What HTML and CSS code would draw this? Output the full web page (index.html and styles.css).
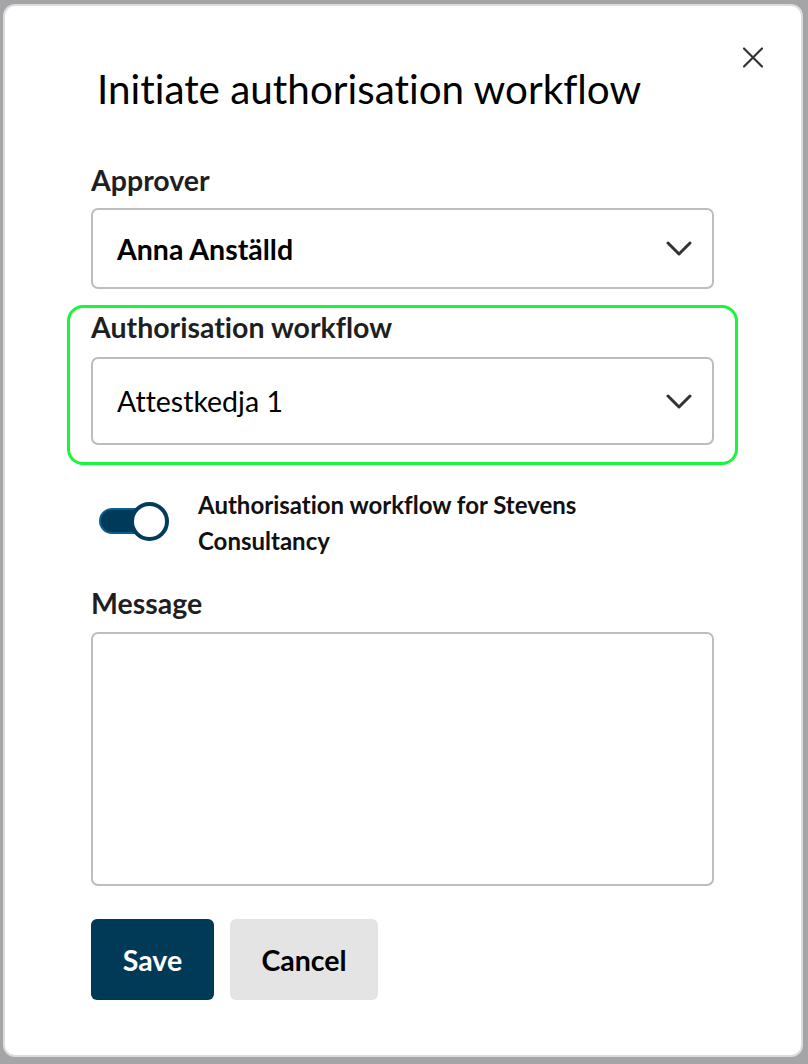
FILE: index.html
```html
<!DOCTYPE html>
<html lang="en">
<head>
<meta charset="utf-8">
<title>Initiate authorisation workflow</title>
<link rel="stylesheet" href="styles.css">
</head>
<body>
<div class="backdrop">
  <div class="modal">
    <button class="close" aria-label="Close">
      <svg width="20" height="21" viewBox="0 0 20 21"><path d="M1 1.5 L19 19.5 M19 1.5 L1 19.5" stroke="#333" stroke-width="2.2" fill="none" stroke-linecap="round"/></svg>
    </button>
    <h1 class="title">Initiate authorisation workflow</h1>

    <div class="field first">
      <label class="label">Approver</label>
      <div class="select bold-value">
        <span>Anna Anställd</span>
        <svg class="chev" width="26" height="15" viewBox="0 0 26 15"><path d="M2 2 L13 13 L24 2" stroke="#333" stroke-width="3" fill="none" stroke-linecap="round" stroke-linejoin="round"/></svg>
      </div>
    </div>

    <div class="highlight">
      <label class="label">Authorisation workflow</label>
      <div class="select tall">
        <span>Attestkedja 1</span>
        <svg class="chev" width="26" height="15" viewBox="0 0 26 15"><path d="M2 2 L13 13 L24 2" stroke="#333" stroke-width="3" fill="none" stroke-linecap="round" stroke-linejoin="round"/></svg>
      </div>
    </div>

    <div class="toggle-row">
      <div class="toggle"><span class="track"></span><span class="knob"></span></div>
      <div class="toggle-label">Authorisation workflow for Stevens Consultancy</div>
    </div>

    <div class="field message">
      <label class="label">Message</label>
      <div class="textarea"></div>
    </div>

    <div class="actions">
      <button class="btn primary">Save</button>
      <button class="btn secondary">Cancel</button>
    </div>
  </div>
</div>
</body>
</html>
```

FILE: styles.css
```css
html, body {
  margin: 0;
  padding: 0;
}
body {
  background: #a5a5a7;
  font-family: Lato, "Noto Sans", sans-serif;
  font-variant-ligatures: none;
  color: #1b1b1b;
  width: 808px;
  height: 1064px;
  overflow: hidden;
}
.backdrop {
  padding: 4px 5px 0 3px;
}
.modal {
  position: relative;
  box-sizing: border-box;
  width: 800px;
  height: 1053px;
  background: #fff;
  border: 2px solid #dcdcdc;
  border-radius: 12px;
  padding: 0 87px 0 86px;
}
.close {
  position: absolute;
  top: 41px;
  right: 38px;
  width: 20px;
  height: 21px;
  padding: 0;
  border: 0;
  background: none;
}
.close svg { display: block; }
.title {
  margin: 0;
  padding: 59px 0 0 6px;
  font-size: 40.4px;
  font-weight: 400;
  line-height: 48px;
  color: #000;
}
.field {
  display: flex;
  flex-direction: column;
}
.field.first { margin-top: 50px; }
.label {
  font-size: 28.5px;
  font-weight: 700;
  line-height: 34px;
  color: #1f1f1f;
}
.field .label { margin-bottom: 11px; }
.select {
  box-sizing: border-box;
  height: 81px;
  border: 2px solid #bdbdbd;
  border-radius: 7px;
  display: flex;
  align-items: center;
  justify-content: space-between;
  padding: 0 20px 0 24px;
  font-size: 28.5px;
  color: #000;
}
.select.tall { height: 88px; }
.bold-value { font-weight: 700; }
.chev { display: block; }
.highlight {
  margin: 16px -24px 0 -24px;
  border: 3px solid #18f53a;
  border-radius: 16px;
  padding: 2px 21px 17px 21px;
  display: flex;
  flex-direction: column;
}
.highlight .label { margin-bottom: 13px; }
.toggle-row {
  display: flex;
  align-items: flex-start;
  margin-top: 22px;
  margin-left: 7px;
  gap: 29px;
}
.toggle {
  position: relative;
  width: 71px;
  height: 40px;
  flex: none;
  margin-top: 15px;
}
.track {
  position: absolute;
  left: 1px;
  top: 6px;
  width: 58px;
  height: 26px;
  box-sizing: border-box;
  border-radius: 13px;
  background: #003a5a;
  border: 2px solid #0c5e8e;
}
.knob {
  position: absolute;
  left: 32px;
  top: 0;
  width: 39px;
  height: 39px;
  box-sizing: border-box;
  border-radius: 50%;
  background: #fff;
  border: 4px solid #023c5c;
}
.toggle-label {
  font-size: 24px;
  font-weight: 700;
  line-height: 36px;
  color: #111;
  width: 420px;
}
.field.message { margin-top: 27px; }
.message .label { margin-bottom: 12px; }
.textarea {
  box-sizing: border-box;
  height: 254px;
  border: 2px solid #bdbdbd;
  border-radius: 7px;
}
.actions {
  display: flex;
  gap: 16px;
  margin-top: 33px;
}
.btn {
  height: 81px;
  border: 0;
  border-radius: 6px;
  font-family: Lato, "Noto Sans", sans-serif;
  font-variant-ligatures: none;
  font-size: 28.5px;
  font-weight: 700;
  padding: 0;
}
.primary {
  width: 123px;
  background: #013a56;
  color: #fff;
}
.secondary {
  width: 148px;
  background: #e4e4e4;
  color: #000;
}
```
